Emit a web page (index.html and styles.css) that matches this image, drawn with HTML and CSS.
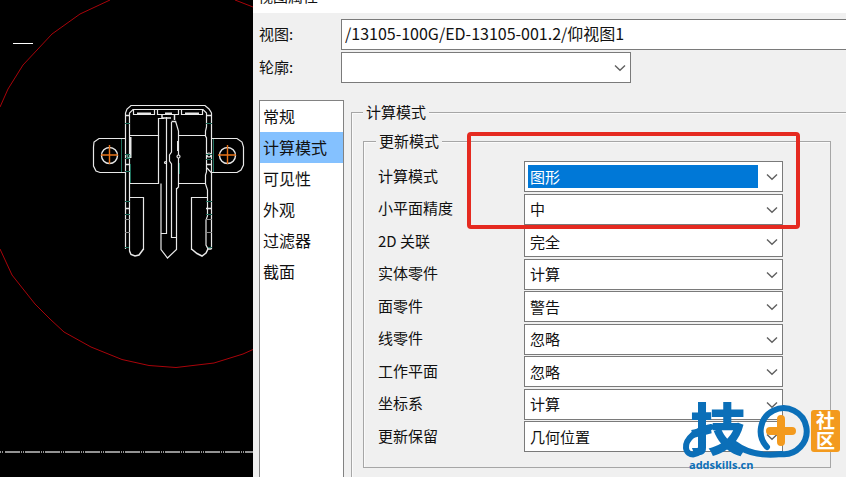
FILE: index.html
```html
<!DOCTYPE html>
<html lang="zh-CN">
<head>
<meta charset="utf-8">
<title>视图属性</title>

<link rel="stylesheet" href="styles.css">
</head>

<body>

<svg width="0" height="0" class="symbols">
	<symbol id="chevron" viewBox="0 0 12 8">
		<path d="M1 1.5 L6 6.2 L11 1.5" fill="none" stroke="#606060" stroke-width="1.4" />
	</symbol>
</svg>

<div class="drawing">
	<svg width="253" height="477" viewBox="0 0 253 477" fill="none">
		<!-- detail circle -->
		<g stroke="#a8040a" stroke-width="1">
			<path d="M0 107 L8 89 L23 65 L52 34 L80 14 L110 0" />
			<path d="M235 0 L253 7" />
			<path d="M0 249 L12 275 L35 304 L50 319 L64 332 L91 347 L122 359.5 L149 365.5 L176 367.5 L214 363 L243 354 L253 349.5" />
		</g>
		<path d="M13 43.5 H33" stroke="#fff" />
		<path d="M5 452 H253" stroke="#c4c4c4" stroke-width="1.5" stroke-dasharray="15 1 1 1 1 1" />
		<path d="M0 452 H1 M2 452 H3" stroke="#c4c4c4" stroke-width="1.5" />

		<g stroke="#e8e8e8" stroke-width="1.2">
			<!-- housing -->
			<path d="M125.5 249 V113 L127 109 L131 105.5 H205 L209 109 L211.5 113 V249" />
			<path d="M129.5 251 V113 L133 109.5 H203 L206.5 113 V127 L205.5 131 V136 L206.5 138 V172 L205.5 175 V184 L207.5 190 V216 L206 220 V245 L208 249" />
			<path d="M133.5 110 V114.5 H154.5 V110 M157.5 110 V114.5 H178.5 V110 M181.5 110 V114.5 H202.5 V110" />
			<path d="M137 113.5 H151 M165 113.5 H172 M185 113.5 H199" stroke-width="2" />
			<path d="M125 115.5 H130 M206 115.5 H212 M125 164.5 H130 M206 164.5 H212 M125 208.5 H130 M206 208.5 H212" stroke-width="1.5" />
			<path d="M125 219.5 H130 M125 232.5 H130 M206 219.5 H212 M206 232.5 H212" stroke="#8d8d8d" />
			<!-- chambers -->
			<path d="M130 135.5 H158.5 V183.5 H130 M179 135.5 H206 M178.5 183.5 H206" />
			<path d="M129.5 197.5 H143.5 V250 M207 197.5 H191.5 V250" />
			<path d="M130.5 137 V158" stroke-width="2" />
			<!-- pins -->
			<path d="M158.5 136 V118.5 H164 M161 183.5 V249.5 L167.5 258 L176.5 249.5 V188" />
			<path d="M166.5 117 V233.5 H161" />
			<path d="M162 115 V118 H171 M171.5 121.5 H176 M174.5 115 V120" stroke-width="1.5" />
			<path d="M171.5 122 V152 L169.5 155 V161 L171.5 164 V237.5 H176" />
			<path d="M175.5 121 L178.5 131 V187 L176.5 189" />
			<path d="M178 141 V151" stroke-width="2" />
			<!-- tips -->
			<path d="M129.5 251 L131 254.5 L135 256 L139 255 L143.5 249 M191.5 249 L197 253.5 L202 256 L206 253 L208 249 H211.5" stroke-width="1.5" />
			<!-- ears -->
			<path d="M125 138.5 H99 L94 142 L93.5 147 V166 L96 171 L100 172.5 H125" />
			<path d="M212 138.5 H237 L242 142 L243.5 147 V165 L241 170 L237 172.5 H211 L207 168" />
			<circle cx="109.5" cy="155.5" r="8" stroke-width="1.4" />
			<circle cx="227.5" cy="155.5" r="8" stroke-width="1.4" />
			<circle cx="178.5" cy="156.5" r="1.5" fill="#000" />
			<circle cx="165.5" cy="162.5" r="1" />
			<circle cx="209" cy="155" r="2" />
			<circle cx="128.5" cy="156" r="1.5" stroke="#75c0ad" />
		</g>
		<g stroke="#1f6f5c">
			<path d="M121.5 139 V172 M213.5 139 V172 M179.5 163 V174 M130.5 164 V183" />
			<path d="M125 123.5 H130 M206 123.5 H212 M125 154.5 H130 M125 158.5 H130 M206 154.5 H212 M206 159.5 H212 M125 171.5 H130 M125 201.5 H130 M206 201.5 H212 M125 214.5 H130 M206 214.5 H212 M125 247.5 H129 M208 247.5 H212" />
		</g>
		<path d="M101 155 H118 M109.5 145 V164 M218 155 H236 M227.5 145 V164" stroke="#e8741a" stroke-width="1.4" />
	</svg>
</div><!-- end drawing -->


<div class="dialog">
	<div class="titlebar">视图属性</div>

	<div class="content">
		<div class="field">
			<label for="view">视图:</label>
			<input id="view" class="box" type="text" value="/13105-100G/ED-13105-001.2/仰视图1">
		</div>
		<div class="field">
			<label for="outline">轮廓:</label>
			<div class="combo outline">
				<select id="outline" class="box"><option></option></select>
				<svg><use href="#chevron" /></svg>
			</div>
		</div>

		<div class="columns">
			<ul class="pages" role="listbox" aria-label="视图属性">
				<li role="option">常规</li>
				<li role="option" class="current" aria-selected="true">计算模式</li>
				<li role="option">可见性</li>
				<li role="option">外观</li>
				<li role="option">过滤器</li>
				<li role="option">截面</li>
			</ul>

			<fieldset class="group outer">
				<legend>计算模式</legend>

				<fieldset class="group inner">
					<legend>更新模式</legend>
					<div class="rows">
						<label for="mode">计算模式</label>
						<div class="combo">
							<select id="mode" class="box focused"><option>图形</option></select>
							<svg><use href="#chevron" /></svg>
						</div>
						<label for="precision">小平面精度</label>
						<div class="combo">
							<select id="precision" class="box"><option>中</option></select>
							<svg><use href="#chevron" /></svg>
						</div>
						<label for="assoc">2D 关联</label>
						<div class="combo">
							<select id="assoc" class="box"><option>完全</option></select>
							<svg><use href="#chevron" /></svg>
						</div>
						<label for="solid">实体零件</label>
						<div class="combo">
							<select id="solid" class="box"><option>计算</option></select>
							<svg><use href="#chevron" /></svg>
						</div>
						<label for="face">面零件</label>
						<div class="combo">
							<select id="face" class="box"><option>警告</option></select>
							<svg><use href="#chevron" /></svg>
						</div>
						<label for="wire">线零件</label>
						<div class="combo">
							<select id="wire" class="box"><option>忽略</option></select>
							<svg><use href="#chevron" /></svg>
						</div>
						<label for="workplane">工作平面</label>
						<div class="combo">
							<select id="workplane" class="box"><option>忽略</option></select>
							<svg><use href="#chevron" /></svg>
						</div>
						<label for="coords">坐标系</label>
						<div class="combo">
							<select id="coords" class="box"><option>计算</option></select>
							<svg><use href="#chevron" /></svg>
						</div>
						<label for="keep">更新保留</label>
						<div class="combo">
							<select id="keep" class="box"><option>几何位置</option></select>
							<svg><use href="#chevron" /></svg>
						</div>
						<div class="marker"></div>
					</div>
				</fieldset>
			</fieldset>
		</div><!-- end columns -->
	</div>
</div><!-- end dialog -->


<svg class="watermark" width="166" height="77" viewBox="0 0 166 77">
	<text x="10" y="50" class="mark">技</text>
	<g fill="none" stroke="#0b6fb8" stroke-linecap="round">
		<path d="M31 27 C17 29 5 39 6 48 C7 57 21 57 22 45" stroke-width="6" />
		<path d="M87 47 A23 23 0 1 1 101 54 C86 56 68 54 55 44" stroke-width="6" />
	</g>
	<path d="M90 31 H112 M101 19 V42" stroke="#f39a1e" stroke-width="8" stroke-linecap="round" />
	<rect x="131" y="10" width="29" height="42" rx="3" fill="#f39a1e" />
	<text x="136" y="28" class="badge">社</text>
	<text x="136" y="48" class="badge">区</text>
	<text x="9" y="69" class="site">addskills.cn</text>
</svg>

</body>
</html>
```
FILE: styles.css
```css
* {
	margin: 0;
	padding: 0;
	box-sizing: border-box;
}

body {
	display: flex;
	height: 100vh;
	overflow: hidden;
	background: #000;
	color: #111;
	font: 15px/20px "Noto Sans CJK SC", sans-serif;
}

.symbols {
	position: absolute;
}

.drawing {
	flex: 0 0 253px;
	overflow: hidden;
}

.drawing svg {
	display: block;
}

/* dialog */
.dialog {
	flex: 1;
	min-width: 0;
	display: flex;
	flex-direction: column;
	background: #f0f0f0;
}

.titlebar {
	display: flex;
	align-items: flex-end;
	height: 13px;
	padding: 0 5px 7px;
	overflow: hidden;
	background: #fff;
}

.content {
	flex: 1;
	min-height: 0;
	display: flex;
	flex-direction: column;
	padding: 6px 0 0 6px;
}

.field {
	display: flex;
	align-items: center;
	margin-bottom: 2px;
}

.field label {
	flex: 0 0 82px;
}

label {
	padding-bottom: 2px;
}

.box {
	display: block;
	width: 100%;
	height: 31px;
	padding: 3px 24px 3px 3px;
	border: 1px solid #7a7a7a;
	border-radius: 0;
	background: #fff;
	color: #111;
	font: inherit;
	text-indent: 2px;
	appearance: none;
}

input.box {
	padding: 1px 3px 4px;
	border-right: 0;
	font-size: 16px;
	text-indent: 0;
}

.combo {
	position: relative;
}

.combo svg {
	position: absolute;
	top: 12px;
	right: 5px;
	width: 12px;
	height: 8px;
	pointer-events: none;
}

.outline {
	width: 290px;
}

.focused {
	background: linear-gradient(#0078d7, #0078d7) content-box, #fff;
	color: #fff;
}

/* page list and its settings */
.columns {
	flex: 1;
	min-height: 0;
	display: flex;
	gap: 7px;
	margin-top: 15px;
}

.pages {
	flex: 0 0 85px;
	border: 1px solid #828282;
	border-bottom: 0;
	background: #fff;
	list-style: none;
	font-size: 16px;
	line-height: 31px;
}

.pages li {
	padding-left: 3px;
}

.pages .current {
	background: #84c1ff;
}

.group {
	min-width: 0;
	border: 1px solid #a6a6a6;
	box-shadow: inset 1px 1px #fafafa;
}

.group legend {
	padding: 0 3px;
	background: #f0f0f0;
}

.outer {
	flex: 1;
	margin-top: 2px;
	padding: 9px 15px 0 11px;
	border-width: 1px 0 0 1px;
}

.inner {
	padding: 10px 47px 15px 14px;
}

.outer > legend {
	margin-left: 0;
}

.inner > legend {
	margin-left: -2px;
}

.rows {
	position: relative;
	display: grid;
	grid-template-columns: 146px 1fr;
	align-items: center;
	align-content: space-between;
	height: 291px;
}

.marker {
	position: absolute;
	top: -29px;
	left: 89px;
	right: -17px;
	height: 97px;
	border: 4px solid #e52a20;
	border-radius: 4px;
}

/* site mark */
.watermark {
	position: absolute;
	right: 0;
	bottom: 0;
}

.mark {
	fill: #0b6fb8;
	font: 900 56px "Noto Sans CJK SC", sans-serif;
}

.badge {
	fill: #fff;
	font: bold 19px "Noto Sans CJK SC", sans-serif;
}

.site {
	fill: #0b6fb8;
	font: bold 11px "Open Sans", sans-serif;
}
```
